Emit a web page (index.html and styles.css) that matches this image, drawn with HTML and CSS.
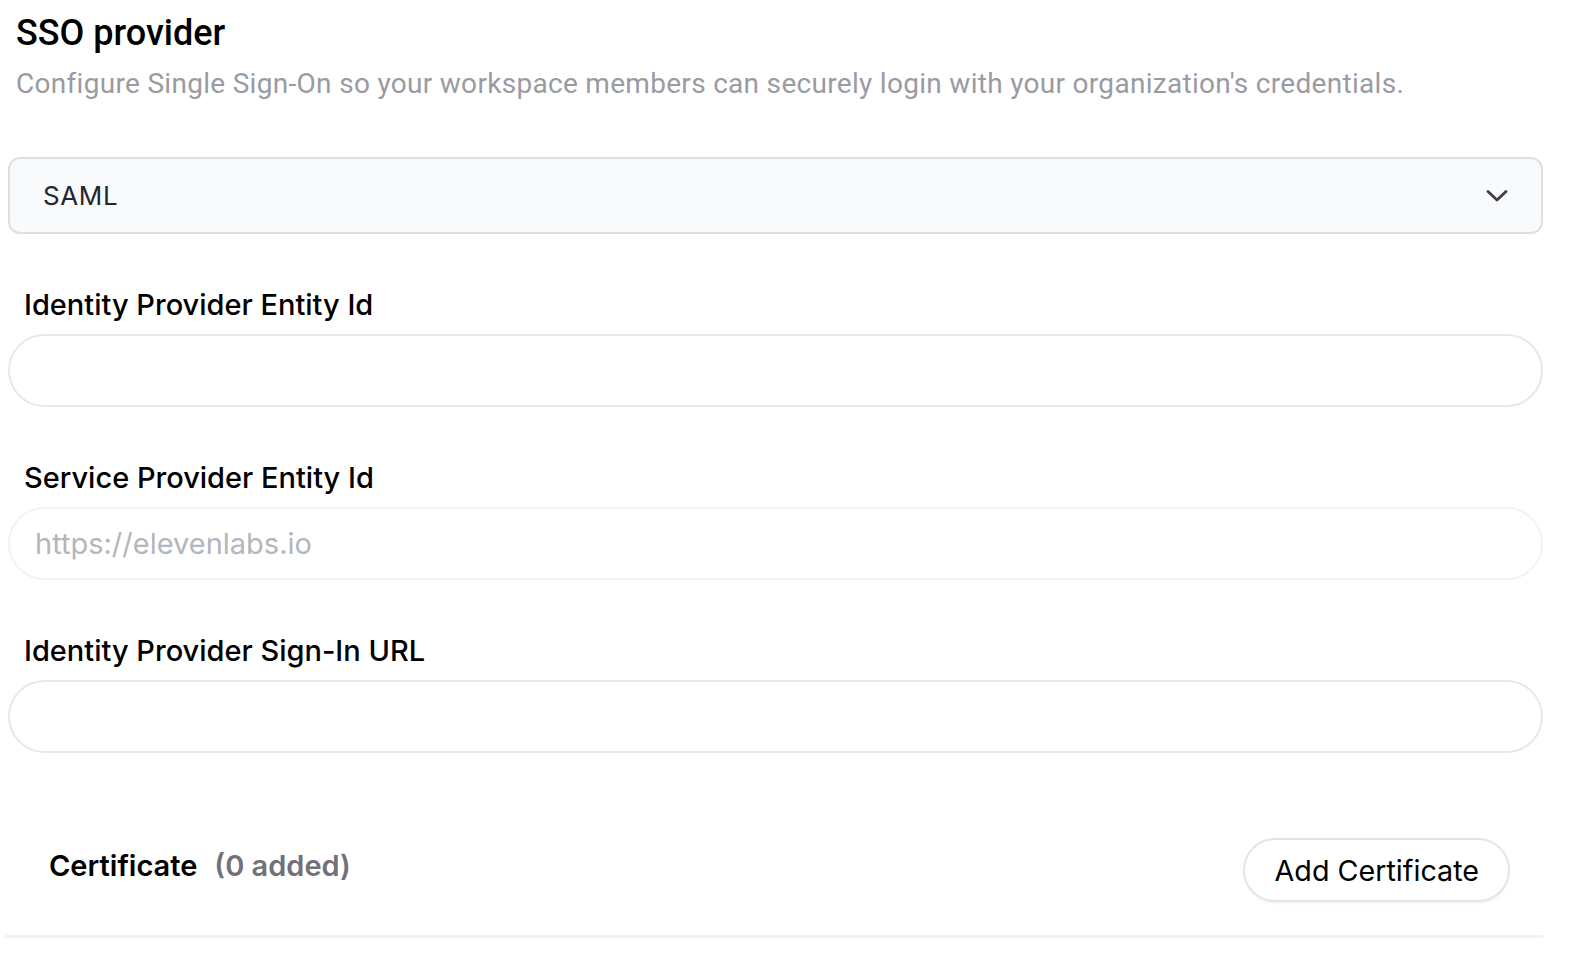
FILE: index.html
```html
<!DOCTYPE html>
<html>
<head>
<meta charset="utf-8">
<link rel="stylesheet" href="styles.css">
</head>
<body>
<div class="page">
  <h1 class="title">SSO provider</h1>
  <p class="subtitle">Configure Single Sign-On so your workspace members can securely login with your organization's credentials.</p>

  <div class="select">
    <span class="select-value">SAML</span>
    <svg class="chevron" width="22" height="14" viewBox="0 0 22 14"><path d="M2 2.5 L11 11 L20 2.5" fill="none" stroke="#3f3f4a" stroke-width="2.8" stroke-linecap="round" stroke-linejoin="round"/></svg>
  </div>

  <div class="field">
    <label class="label">Identity Provider Entity Id</label>
    <div class="input"></div>
  </div>

  <div class="field">
    <label class="label">Service Provider Entity Id</label>
    <div class="input input-disabled"><span class="placeholder">https://elevenlabs.io</span></div>
  </div>

  <div class="field">
    <label class="label">Identity Provider Sign-In URL</label>
    <div class="input"></div>
  </div>

  <div class="cert-row">
    <div class="cert-title"><span class="cert-name">Certificate</span><span class="cert-count">(0 added)</span></div>
    <button class="btn">Add Certificate</button>
  </div>

  <div class="divider"></div>
</div>
</body>
</html>
```

FILE: styles.css
```css
* { box-sizing: border-box; }
html, body { margin: 0; padding: 0; background: #ffffff; }
body { font-family: Inter, "Noto Sans", sans-serif; color: #000; }

.page {
  width: 1547px;
  padding: 15px 4px 0 8px;
}

.title {
  margin: 0 0 0 8px;
  font-family: Roboto, Inter, sans-serif;
  font-size: 36px;
  line-height: 36px;
  font-weight: 500;
  color: #000;
}

.subtitle {
  margin: 16px 0 0 8px;
  font-family: Roboto, Inter, sans-serif;
  font-size: 28px;
  line-height: 34px;
  color: #9a9ba2;
  letter-spacing: 0.3px;
}

.select {
  margin-top: 56px;
  height: 77px;
  border: 2px solid #dedfe1;
  border-radius: 12px;
  background: #f9fafb;
  display: flex;
  align-items: center;
  justify-content: space-between;
  padding: 0 33px 0 33px;
}
.select-value {
  font-size: 26px;
  color: #25252d;
  letter-spacing: 0.6px;
}
.chevron { display: block; }

.field { margin-top: 55px; }
.label {
  display: block;
  margin-left: 16px;
  margin-bottom: 13px;
  font-size: 29px;
  line-height: 32px;
  font-weight: 500;
  color: #000;
}
.input {
  height: 73px;
  border: 2px solid #e8e8e8;
  border-radius: 37px;
  background: #fff;
  display: flex;
  align-items: center;
  padding: 0 25px;
}
.input-disabled { border-color: #f3f3f3; }
.placeholder {
  font-size: 29px;
  color: #b4b6ba;
}

.cert-row {
  margin-top: 85px;
  display: flex;
  align-items: center;
  justify-content: space-between;
  padding: 0 33px 0 41px;
}
.cert-title { display: flex; align-items: baseline; gap: 17px; margin-top: -10px; }
.cert-name { font-size: 29px; font-weight: 600; color: #000; }
.cert-count { font-size: 29px; font-weight: 600; color: #71717a; }

.btn {
  height: 64px;
  padding: 0 29px 0 30px;
  border: 2px solid #e5e5e5;
  border-radius: 32px;
  background: #fff;
  font-family: Inter, sans-serif;
  font-size: 28.7px;
  color: #000;
  box-shadow: 0 2px 3px rgba(0,0,0,0.04);
}

.divider {
  margin-top: 33px;
  margin-left: -3px;
  height: 3px;
  background: #f2f2f3;
}
```
